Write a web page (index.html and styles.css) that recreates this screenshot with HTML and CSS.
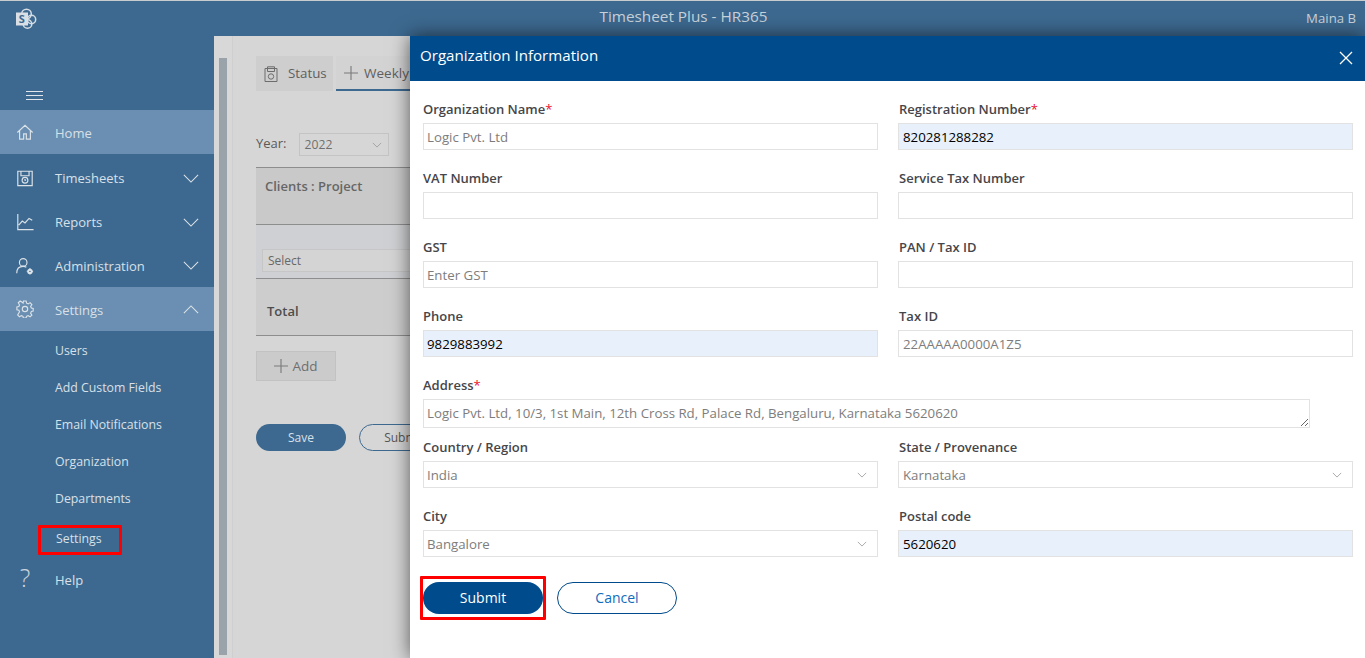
FILE: index.html
```html
<!DOCTYPE html>
<html lang="en">
<head>
<meta charset="utf-8">
<title>Timesheet Plus - HR365</title>
<link rel="stylesheet" href="styles.css">
</head>
<body>
<header class="topbar">
  <svg class="logo" viewBox="0 0 22 22" width="22" height="22" fill="none">
    <circle cx="11.500" cy="6" r="4.800" stroke="#d5dde4" stroke-width="1.500"/>
    <circle cx="16.500" cy="11.500" r="4.200" stroke="#d5dde4" stroke-width="1.500"/>
    <circle cx="12.500" cy="16" r="4.300" stroke="#d5dde4" stroke-width="1.500"/>
    <rect x="1" y="4.500" width="12" height="13" fill="#d9dfe4"/>
    <text x="3.700" y="14.800" class="logo-s">S</text>
  </svg>
  <div class="app-title">Timesheet Plus - HR365</div>
  <div class="user">Maina B</div>
</header>
<div class="shell">
  <nav class="sidebar">
    <div class="burger"><span></span><span></span><span></span></div>
    <a class="nav-row active home">
      <svg class="ico" viewBox="0 0 20 20"><path d="M1.500 10.500 10 2.500l8.500 8M4 8.500V18h4.500v-6h3v6H16V8.500"/></svg>
      <span class="nav-text">Home</span>
    </a>
    <a class="nav-row sheets">
      <svg class="ico" viewBox="0 0 20 20"><path d="M2 2.500h16v16H2zM5.500 2.500v5h9v-5"/><circle cx="10" cy="12.500" r="3.200"/><path d="M10 11v1.500h1.200"/></svg>
      <span class="nav-text">Timesheets</span>
      <svg class="chev" viewBox="0 0 18 10"><path d="M1 1l8 8 8-8"/></svg>
    </a>
    <a class="nav-row">
      <svg class="ico" viewBox="0 0 20 20"><path d="M2 1v17.500H19.500M3 13.500l4-4.500 3 2 4.500-5 3.500 2"/></svg>
      <span class="nav-text">Reports</span>
      <svg class="chev" viewBox="0 0 18 10"><path d="M1 1l8 8 8-8"/></svg>
    </a>
    <a class="nav-row admin">
      <svg class="ico" viewBox="0 0 20 20"><circle cx="8" cy="6" r="4.200"/><path d="M.800 18c0-4.500 2.700-7.500 7.200-7.500 1.500 0 2.500.3 3.500 1"/><circle cx="15.500" cy="16" r="1.900" stroke-width="2.200"/><path d="M15.500 12.500v1M15.500 18.500v1M12 16h1M18 16h1" stroke-width="1.600"/></svg>
      <span class="nav-text">Administration</span>
      <svg class="chev" viewBox="0 0 18 10"><path d="M1 1l8 8 8-8"/></svg>
    </a>
    <a class="nav-row active settings">
      <svg class="ico" viewBox="0 0 20 20"><circle cx="10" cy="10" r="3"/><path d="M8.500 1.500h3l.5 2.500 1.800.8 2.200-1.400 2 2.100-1.400 2.200.8 1.800 2.100.5v3l-2.100.5-.8 1.800 1.400 2.200-2.100 2-2.200-1.400-1.800.8-.5 2.100h-3l-.5-2.100-1.800-.8-2.200 1.400-2-2.100L4 13.700l-.8-1.800-2.200-.5v-3l2.200-.5.800-1.800L2.600 3.500l2.100-2 2.200 1.400L8 4z" transform="translate(0 -.4) scale(.98)"/></svg>
      <span class="nav-text">Settings</span>
      <svg class="chev" viewBox="0 0 18 10"><path d="M1 9l8-8 8 8"/></svg>
    </a>
    <ul class="subnav">
      <li>Users</li>
      <li>Add Custom Fields</li>
      <li>Email Notifications</li>
      <li>Organization</li>
      <li>Departments</li>
    </ul>
    <div class="sub-marked"><span>Settings</span></div>
    <a class="nav-row help">
      <span class="help-mark">?</span>
      <span class="nav-text">Help</span>
    </a>
  </nav>
  <main class="main">
    <div class="scrollstrip"><div class="scrollthumb"></div></div>
    <div class="content">
      <div class="tabs">
        <div class="tab tab-status">
          <svg class="tab-ico" viewBox="0 0 14 16"><path d="M1 2.500h12v13H1zM3.500 2.500V.800h7v4.700h-7zM3.500 3v2"/><circle cx="7" cy="10.500" r="2.700"/></svg>
          <span class="tab-label">Status</span>
        </div>
        <div class="tab tab-weekly">
          <svg class="tab-plus" viewBox="0 0 15 15"><path d="M7.500 0v15M0 7.500h15"/></svg>
          Weekly Timesheet
        </div>
      </div>
      <div class="year-row">
        <span class="year-label">Year:</span>
        <div class="year-select">2022
          <svg class="mini-chev" viewBox="0 0 12 7"><path d="M1 1l5 5 5-5"/></svg>
        </div>
      </div>
      <div class="grid-table">
        <div class="t-head">Clients : Project</div>
        <div class="t-body"><div class="t-select">Select</div></div>
        <div class="t-foot">Total</div>
      </div>
      <button class="add-btn" type="button">
        <svg class="tab-plus" viewBox="0 0 15 15"><path d="M7.500 0v15M0 7.500h15"/></svg>
        Add
      </button>
      <div class="page-actions">
        <button class="page-save" type="button">Save</button>
        <button class="page-submit" type="button">Submit</button>
      </div>
    </div>
  </main>
</div>
<section class="modal">
  <div class="modal-head">
    <h1>Organization Information</h1>
    <svg class="close" viewBox="0 0 14 14"><path d="M1 1l12 12M13 1 1 13"/></svg>
  </div>
  <form class="form">
    <div class="field"><label>Organization Name<b>*</b></label><input class="ctl" placeholder="Logic Pvt. Ltd"></div>
    <div class="field right"><label>Registration Number<b>*</b></label><input class="ctl filled" value="820281288282"></div>
    <div class="field"><label>VAT Number</label><input class="ctl"></div>
    <div class="field right"><label>Service Tax Number</label><input class="ctl"></div>
    <div class="field"><label>GST</label><input class="ctl" placeholder="Enter GST"></div>
    <div class="field right"><label>PAN / Tax ID</label><input class="ctl"></div>
    <div class="field"><label>Phone</label><input class="ctl filled" value="9829883992"></div>
    <div class="field right"><label>Tax ID</label><input class="ctl" placeholder="22AAAAA0000A1Z5"></div>
    <div class="field wide"><label>Address<b>*</b></label><textarea class="ctl area" rows="1" placeholder="Logic Pvt. Ltd, 10/3, 1st Main, 12th Cross Rd, Palace Rd, Bengaluru, Karnataka 5620620"></textarea></div>
    <div class="field"><label>Country / Region</label><div class="ctl pick">India<svg class="mini-chev" viewBox="0 0 12 7"><path d="M1 1l5 5 5-5"/></svg></div></div>
    <div class="field right"><label>State / Provenance</label><div class="ctl pick">Karnataka<svg class="mini-chev" viewBox="0 0 12 7"><path d="M1 1l5 5 5-5"/></svg></div></div>
    <div class="field"><label>City</label><div class="ctl pick">Bangalore<svg class="mini-chev" viewBox="0 0 12 7"><path d="M1 1l5 5 5-5"/></svg></div></div>
    <div class="field right"><label>Postal code</label><input class="ctl filled" value="5620620"></div>
  </form>
  <div class="modal-actions">
    <div class="submit-mark"><button class="btn-submit" type="button">Submit</button></div>
    <button class="btn-cancel" type="button">Cancel</button>
  </div>
</section>
</body>
</html>
```
FILE: styles.css
```css
* { box-sizing: border-box; }
html, body { margin: 0; height: 100%; overflow: hidden; }
body {
  font-family: "Open Sans", "Noto Sans", sans-serif;
  font-size: 13px;
  background: #d6d6d6;
  display: flex;
  flex-direction: column;
}
.topbar {
  height: 36px;
  flex: none;
  background: #3d6990;
  border-top: 1px solid #c9ccce;
  display: grid;
  grid-template-columns: 1fr auto 1fr;
  align-items: center;
  padding: 0 9px 0 15px;
  color: #c8d2da;
}
.logo { display: block; }
.logo-s { font: 700 11px "Open Sans", sans-serif; fill: #3d6990; }
.app-title { font-size: 15.300px; margin-top: -6px; transform: translateX(-2px); }
.user { justify-self: end; font-size: 13.200px; margin-top: -2px; }
.shell { flex: 1; display: flex; min-height: 0; }
.sidebar {
  width: 214px;
  flex: none;
  background: #3d6990;
  color: #d8e0e8;
  padding-top: 55px;
}
.burger { height: 19px; padding: 0 0 0 26px; display: flex; flex-direction: column; gap: 3px; }
.burger span { display: block; width: 17px; height: 1px; background: #e0e6eb; }
.nav-row {
  height: 44px;
  display: flex;
  align-items: center;
  padding: 0 15px 0 16px;
}
.nav-row.active { background: #6a8fb2; }
.nav-row.sheets { margin-top: 2px; }
.nav-row.admin { height: 43px; }
.home .nav-text, .settings .nav-text, .help .nav-text { padding-top: 2px; }
.ico { width: 18px; height: 18px; flex: none; fill: none; stroke: #dbe2e8; stroke-width: 1.300; }
.nav-text { margin-left: 21px; flex: 1; }
.chev { width: 16px; height: 9px; flex: none; fill: none; stroke: #dbe2e8; stroke-width: 1.200; }
.help-mark { width: 18px; flex: none; text-align: center; font-size: 25px; font-weight: 300; line-height: 1; margin-top: -3px; color: #c8d4de; }
.subnav { list-style: none; margin: 0; padding: 1px 0 0 55px; font-size: 12.300px; }
.subnav li { height: 37px; display: flex; align-items: center; }
.sub-marked {
  margin: 8px 0 2px 38px;
  width: 84px;
  height: 30px;
  border: 3px solid #f00;
  border-radius: 1px;
  font-size: 12.300px;
  display: flex;
  align-items: center;
  padding: 0 0 3px 15px;
}
.main { flex: 1; display: flex; min-width: 0; overflow: hidden; }
.scrollstrip {
  width: 19px;
  flex: none;
  padding: 22px 5px 3px;
  background: #d8d8d8;
  border-right: 1px solid #cfcfcf;
}
.scrollthumb { height: 100%; background: #9aa3a9; }
.content { padding: 20px 0 0 23px; flex: 1; min-width: 0; color: #555; }
.tabs { display: flex; gap: 3px; height: 35px; }
.tab { display: flex; align-items: center; font-size: 13.500px; padding: 0 8px; background: #d3d3d3; white-space: nowrap; color: #5f5f5f; }
.tab-status { width: 77px; background: #cecece; padding-right: 0; }
.tab-label { margin-top: -2px; font-size: 13.300px; }
.tab-weekly { width: 200px; border-bottom: 2px solid #3d6990; }
.tab-ico { width: 14px; height: 16px; flex: none; margin-right: 10px; fill: none; stroke: #6d6d6d; stroke-width: 1; }
.tab-plus { width: 14px; height: 14px; margin-right: 6px; fill: none; stroke: #7a7a7a; stroke-width: 1.200; flex: none; }
.year-row { margin-top: 42px; display: flex; align-items: center; gap: 12px; height: 23px; font-size: 13px; color: #5a5a5a; }
.year-label { margin-top: -4px; }
.year-select {
  width: 90px;
  height: 23px;
  border: 1px solid #c4c4c4;
  display: flex;
  align-items: center;
  justify-content: space-between;
  padding: 0 4px 0 5px;
  font-size: 12.200px;
  color: #6f6f6f;
}
.mini-chev { width: 10px; height: 6px; fill: none; stroke: #9a9a9a; stroke-width: 1; flex: none; }
.year-select .mini-chev { width: 10px; margin-right: 2px; }
.grid-table { margin-top: 11px; width: 800px; border-top: 1px solid #8d8d8d; }
.t-head { height: 57px; background: #c9c9c9; border-bottom: 1px solid #8d8d8d; padding: 9px 9px; font-weight: 600; font-size: 13px; color: #666; }
.t-body { height: 54px; background: #cfd0d3; border-bottom: 1px solid #8d8d8d; padding: 24px 0 0 6px; }
.t-select { height: 23px; background: #d4d4d4; border: 1px solid #c6c6c6; padding-left: 5px; font-size: 12px; line-height: 22px; color: #686868; }
.t-foot { height: 57px; background: #cdcdcd; border-bottom: 1px solid #8d8d8d; padding: 8px 11px 0; display: flex; align-items: center; font-weight: 600; font-size: 13px; color: #4d4d4d; }
.add-btn {
  margin-top: 15px;
  width: 80px;
  height: 30px;
  background: #cbcbcb;
  border: 1px solid #c2c2c2;
  display: flex;
  align-items: center;
  justify-content: center;
  font: 13.500px "Open Sans", sans-serif;
  color: #6f6f6f;
  padding: 0;
}
.add-btn .tab-plus { margin-right: 4px; }
.page-actions { margin-top: 43px; display: flex; gap: 13px; }
.page-save, .page-submit {
  height: 27px;
  width: 90px;
  border-radius: 14px;
  font: 12px "Open Sans", sans-serif;
  padding: 0;
}
.page-save { background: #3d6990; border: 0; color: #d8e0e8; }
.page-submit { background: transparent; border: 1px solid #3d6990; color: #555; }
.modal {
  position: absolute;
  left: 410px;
  right: 0;
  top: 36px;
  bottom: 0;
  background: #fff;
  box-shadow: 0 0 18px rgba(0, 0, 0, .6);
}
.modal-head {
  height: 45px;
  background: #004b8c;
  color: #fff;
  display: flex;
  align-items: center;
  justify-content: space-between;
  padding: 0 12px 8px 10px;
}
.modal-head h1 { margin: 0; font-size: 15.100px; font-weight: 400; }
.close { width: 14px; height: 14px; fill: none; stroke: #fff; stroke-width: 1.300; margin-top: 6px; }
.form {
  display: grid;
  grid-template-columns: 455px 455px;
  column-gap: 20px;
  padding: 19px 0 0 13px;
}
.field { display: flex; flex-direction: column; height: 69px; }
.field.wide { grid-column: 1 / -1; height: 62px; }
.field label { height: 23px; font-size: 13px; font-weight: 600; line-height: 18px; color: #46464a; }
.field.right label { padding-left: 1px; }
.field label b { color: #e8112d; font-weight: 400; }
.ctl {
  display: block;
  width: 100%;
  height: 27px;
  border: 1px solid #e2e2e2;
  background: #fff;
  font: 13.250px "Open Sans", sans-serif;
  color: #000;
  padding: 0 3px;
  margin: 0;
  outline: 0;
  border-radius: 0;
}
.field.right .ctl { padding-left: 4px; }
.ctl::placeholder { color: #7d7d7d; opacity: 1; }
.filled { background: #e8f0fb; }
.area { height: 29px; width: 887px; padding: 4px 3px; line-height: 18px; overflow: hidden; }
.pick { display: flex; align-items: center; justify-content: space-between; color: #7d7d7d; padding-right: 10px; }
.modal-actions { display: flex; align-items: center; gap: 11px; padding: 0 0 0 10px; margin-top: 0; }
.submit-mark {
  width: 126px;
  height: 44px;
  border: 3px solid #f00;
  border-radius: 1px;
  display: flex;
  align-items: center;
  justify-content: center;
}
.btn-submit, .btn-cancel {
  width: 120px;
  height: 32px;
  border-radius: 16px;
  font: 14px "Open Sans", sans-serif;
  padding: 0 0 2px;
}
.btn-submit { background: #004b8c; color: #fff; border: 0; }
.btn-cancel { background: #fff; color: #0f6cbd; border: 1px solid #004b8c; }
```
